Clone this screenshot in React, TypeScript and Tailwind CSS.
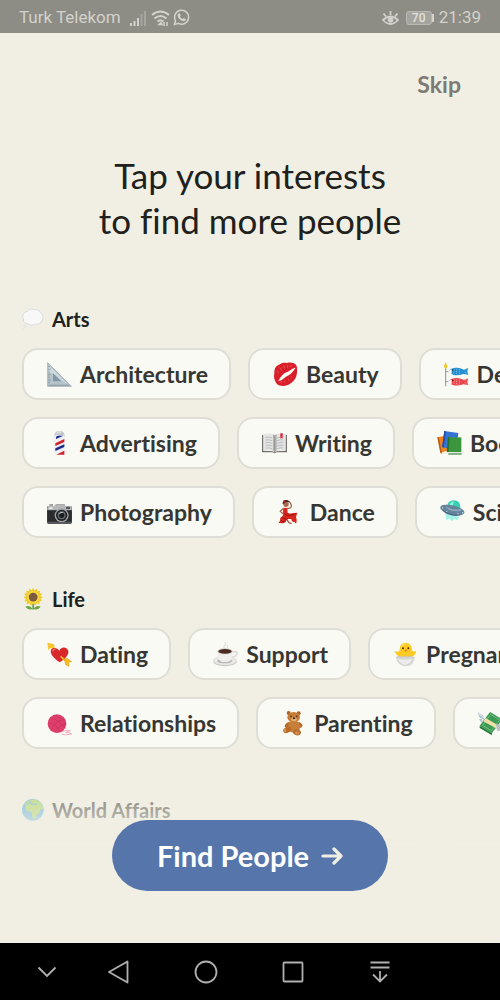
import type { ReactNode } from "react";
import { clsx } from "clsx";

interface Interest {
  label: string;
  icon: ReactNode;
}

interface Topic {
  title: string;
  icon: ReactNode;
  rows: Interest[][];
  loading?: boolean;
}

interface EmojiProps {
  children: ReactNode;
  small?: boolean;
}

const Emoji = ({ children, small }: EmojiProps) => (
  <svg
    viewBox="0 0 75 75"
    aria-hidden="true"
    className={clsx("shrink-0", small ? "size-[22px]" : "size-[25px]")}
  >
    {children}
  </svg>
);

const ThoughtBubble = () => (
  <Emoji small>
    <path
      d="M18 12C23 3 36 2 43 6c10-2 20 4 22 12 8 5 9 19 2 26-3 10-14 14-22 11-8 5-19 4-24-1C10 54 3 47 5 38-1 28 5 14 18 12Z"
      fill="#f8f8f9"
      stroke="#d5d8da"
      strokeWidth="3"
    />
    <circle cx="10" cy="62" r="4" fill="#f5f5f6" stroke="#d5d8da" strokeWidth="2" />
    <circle cx="3" cy="71" r="2.5" fill="#e2e4e5" />
  </Emoji>
);

const SetSquare = () => (
  <Emoji>
    <path d="M2 2v71h71Z" fill="#b7c4ca" stroke="#8d9ba2" strokeWidth="2" />
    <path d="M5 10v22l13 2 30 24 17 12Z" fill="#cfdadf" />
    <path d="M18 34v24h25Z" fill="#8197a4" />
    <path d="M4 14h5M4 22h7M4 30h5M4 38h7M4 46h5M4 54h7M4 62h5" stroke="#687a84" strokeWidth="2" />
    <path d="M5 70h62" stroke="#93a3ab" strokeWidth="4" />
  </Emoji>
);

const BarberPole = () => (
  <Emoji>
    <path d="M22 13C22-4 53-4 53 13v4H22Z" fill="#c4c8cb" />
    <path d="M29 8c3-6 10-6 13-4" fill="none" stroke="#f4f4f4" strokeWidth="3" />
    <path d="M22 13h31v58H22Z" fill="#eef0f3" />
    <path d="M27 21q0-7 8-7h14L27 24ZM25 52l27-12v8L25 60Z" fill="#1c2a8e" />
    <path d="M25 37l27-13v9L25 45ZM28 71l24-12v12Z" fill="#d3202a" />
  </Emoji>
);

const Camera = () => (
  <Emoji>
    <path d="M3 18h20l4-5h25l3 5h16q4 0 4 5v44q0 5-5 5H4q-4 0-4-5V22q0-4 3-4Z" fill="#55595c" />
    <path d="M1 18h22l4-5h25l3 5h19v13H1Z" fill="#b5b7b8" />
    <path d="M7 17V13h11v4" fill="#777" />
    <path d="M1 31h73v34H1Z" fill="#292b2d" />
    <rect x="7" y="22" width="10" height="5" rx="2" fill="#eee" />
    <rect x="57" y="20" width="12" height="7" rx="1" fill="#55595c" />
    <circle cx="44" cy="46" r="21" fill="#a0a3a4" />
    <circle cx="44" cy="46" r="17" fill="#1f2123" />
    <circle cx="44" cy="46" r="12" fill="#666b70" />
    <circle cx="44" cy="46" r="8" fill="#191b1e" />
    <path d="M37 42q4-6 10-5" fill="none" stroke="#cfd5da" strokeWidth="3" />
  </Emoji>
);

const Kiss = () => (
  <Emoji>
    <path
      d="M4 34C3 20 10 10 21 7 29 0 36 2 42 3 52 0 62 2 69 8c5 7 4 21 2 30-3 16-17 27-29 32-13 4-28 1-33-8C3 53 2 44 4 34Z"
      fill="#d91f2a"
    />
    <path d="M68 17C57 18 51 27 42 30 31 34 23 43 16 57c10-1 16-8 23-13 12-5 19-13 29-27Z" fill="#fbf8f4" />
    <path d="M11 27l7 6M20 16l5 9M32 10l2 9M45 9l-2 8M56 9l-4 6M24 63l2-6M36 62l-1-6M48 56l-3-5M58 46l-5-4" stroke="#ee6870" strokeWidth="2" />
  </Emoji>
);

const CarpStreamer = () => (
  <Emoji>
    <path d="M5 11v62" stroke="#8a9298" strokeWidth="3" />
    <path d="M5 0l5 13-2 6H3L0 13Z" fill="#f2c51f" />
    <path d="M5 29h10M5 59h10" stroke="#777" strokeWidth="2" />
    <path d="M16 25q7-9 24-8 13 1 19 6l14-5-3 10 3 10-15-2q-13 5-29 3-11-3-14-14Z" fill="#248fce" />
    <path d="M16 56q7-9 24-8 13 1 19 6l14-5-3 10 3 10-15-2q-13 5-29 3-11-3-14-14Z" fill="#e9474d" />
    <path d="M14 26l9-4v13l-9-2ZM14 57l9-4v13l-9-2Z" fill="#fff" />
    <path d="M30 19v18M38 20v18M46 21v16M62 24l8-3M62 31l8 3" stroke="#8cc9ee" strokeWidth="2" strokeDasharray="4 2" />
    <path d="M30 50v18M38 51v18M46 52v16M62 55l8-3M62 62l8 3" stroke="#ffb3b1" strokeWidth="2" strokeDasharray="4 2" />
    <circle cx="26" cy="24" r="2.5" fill="#10334c" />
    <circle cx="26" cy="55" r="2.5" fill="#5b1418" />
  </Emoji>
);

const OpenBook = () => (
  <Emoji>
    <path d="M0 13l4-2v48l30 2 4 3 4-3 29-2V11l4 2v51H44q-6 5-13 0H0Z" fill="#74706d" />
    <path d="M5 9q20-4 33 3 13-7 32-3v50q-20-3-32 4-13-7-33-4Z" fill="#e4e4e2" />
    <path d="M33 10q3 1 5 4 2-3 6-4v49l-6 4-5-4Z" fill="#b2b2b1" />
    <path d="M38 13v50" stroke="#858585" strokeWidth="2" />
    <path d="M11 19q9-2 20 2M11 27q9-2 20 2M11 35q9-2 20 2M11 43q9-2 20 2M11 51q9-2 20 2M45 22l9-3M45 29q9-4 19-2M45 37q9-4 19-2M45 45q9-4 19-2M45 53q9-4 19-2" stroke="#9ea9ae" strokeWidth="2" fill="none" />
    <path d="M55 7l7 0v16l-4-3-3 3Z" fill="#e0243a" />
  </Emoji>
);

const Books = () => (
  <Emoji>
    <path d="M1 19l20-4 12 45-21 6Z" fill="#ef8421" />
    <path d="M11 65l19-6 2 7-18 4Z" fill="#fff1d8" />
    <path d="M1 19l4-1 10 50-5-2Z" fill="#b9560f" />
    <path d="M22 0l42 6-6 50-42-7Z" fill="#3672d2" />
    <path d="M22 0l5 1-7 49-5-2Z" fill="#1f4fae" />
    <path d="M33 19h40v45H33Z" fill="#3b963e" />
    <path d="M33 19h5l-3 46-6-3Z" fill="#28712d" />
    <path d="M31 63l43 1v6H34q-4-1-3-7Z" fill="#e6eee0" />
    <path d="M34 69h40" stroke="#28712d" strokeWidth="3" />
  </Emoji>
);

const Dancer = () => (
  <Emoji>
    <path d="M32 25q12 1 11-9-1-6-6-11" fill="none" stroke="#a8694d" strokeWidth="4" strokeLinecap="round" />
    <path d="M17 27l-7 7 8 7" fill="none" stroke="#a8694d" strokeWidth="4" strokeLinecap="round" />
    <circle cx="27" cy="13" r="8" fill="#a8694d" />
    <path d="M17 12Q16 1 26 0q11-1 11 8-6-3-12-1-3 6-8 5Z" fill="#4b2b21" />
    <circle cx="21" cy="4" r="3" fill="#e2232a" />
    <path d="M19 23l12 1 1 14q9 4 13 2l16-2-4 13q4 10 0 20l-5-6q-8 4-9-8-8 1-12-1-6 14-15 14-5-1-11-1l5-9q-3-8 5-10 6-7 3-15Z" fill="#d9251d" />
    <path d="M20 40q9 8 19 6 10-1 17-6M16 51q7 9 17 6M11 61q7 6 14 3" stroke="#96140e" strokeWidth="3" fill="none" />
    <path d="M30 60l7 9 7 1" fill="none" stroke="#9d5b40" strokeWidth="4" />
  </Emoji>
);

const FlyingSaucer = () => (
  <Emoji>
    <path d="M16 40l42 10-6 11-9-4-7 7-8-8-9 4Z" fill="#7df0df" opacity=".7" />
    <path d="M21 21Q22 2 42 1q21 1 19 25-20 8-40-5Z" fill="#35cfb4" />
    <path d="M29 12q5-8 14-8-5 7-5 18l-8-1Z" fill="#8af4dd" />
    <ellipse cx="37" cy="30" rx="37" ry="14" transform="rotate(13 37 30)" fill="#67829b" />
    <path d="M17 19q22 14 46 8 3 7-13 7-26 0-33-15Z" fill="#8fa9be" />
    <path d="M5 27q30 22 64 15-15 9-36 4-21-5-28-19Z" fill="#4c6b88" />
    <circle cx="8" cy="24" r="2" fill="#bfe7ee" />
    <circle cx="20" cy="34" r="2" fill="#bfe7ee" />
    <circle cx="54" cy="41" r="2" fill="#bfe7ee" />
    <circle cx="68" cy="38" r="2" fill="#bfe7ee" />
  </Emoji>
);

const Sunflower = () => (
  <Emoji small>
    <path d="M38 45v28" stroke="#51923e" strokeWidth="5" />
    <path d="M37 72Q27 57 11 64q11 13 26 8ZM39 72q8-15 25-8-10 13-25 8Z" fill="#68a940" />
    <path
      d="M38 0l5 8 8-6 1 9 10-2-2 9 9 2-6 7 8 5-8 5 5 7-9 2 1 9-10-3-3 8-9-6-9 6-3-8-10 3 1-9-9-2 5-7-8-5 8-5-6-7 9-2-2-9 10 2 1-9 8 6Z"
      fill="#f0cb2c"
    />
    <circle cx="38" cy="31" r="21" fill="#f7d941" />
    <circle cx="38" cy="31" r="15" fill="#7b563b" />
    <path d="M28 26h20M26 32h24M29 38h18M33 20v22M42 20v22" stroke="#9b7654" strokeWidth="2" strokeDasharray="2 3" />
  </Emoji>
);

const HeartArrow = () => (
  <Emoji>
    <path d="M13 13l48 48" stroke="#d99b17" strokeWidth="5" />
    <path d="M1 2l20 4 3 15-13-3-7 7Z" fill="#f7c832" />
    <path
      d="M38 61C15 46 7 31 13 22c7-8 19-4 24 4 3-8 13-13 23-6 10 10 2 26-22 41Z"
      fill="#d9282c"
    />
    <path d="M17 28q1-6 8-7" fill="none" stroke="#f66c66" strokeWidth="4" />
    <path d="M41 43l16 16" stroke="#f2bd26" strokeWidth="5" />
    <path d="M54 54l5-6 10 8 5 3-9 1 1 13-10-5Z" fill="#f9bd24" stroke="#dfa01f" strokeWidth="2" />
  </Emoji>
);

const Coffee = () => (
  <Emoji>
    <ellipse cx="36" cy="58" rx="36" ry="15" fill="#cbc9c8" />
    <ellipse cx="36" cy="55" rx="36" ry="14" fill="#e9e7e5" />
    <ellipse cx="35" cy="57" rx="22" ry="7" fill="#b9b6b4" />
    <path d="M58 31q16-6 14 4-2 9-17 12" fill="none" stroke="#dedcda" strokeWidth="5" />
    <path d="M13 30h46q1 27-15 30H27Q13 55 13 30Z" fill="#f0efed" />
    <ellipse cx="36" cy="28" rx="23" ry="9" fill="#d0cdca" />
    <ellipse cx="36" cy="28" rx="20" ry="7" fill="#4b2b20" />
    <path d="M34 18q-5-5 2-9 4-4 0-8M42 18q5-5 0-9" fill="none" stroke="#d6d5d2" strokeWidth="3" />
  </Emoji>
);

const Chick = () => (
  <Emoji>
    <path d="M19 27Q20 2 38 2t20 25q4 2 12 0-3 14-14 17H21Q9 41 5 27q9 3 14 0Z" fill="#fdcb24" />
    <path d="M26 12q4-7 11-7" fill="none" stroke="#ffe263" strokeWidth="4" />
    <circle cx="30" cy="19" r="3" fill="#493118" />
    <circle cx="46" cy="19" r="3" fill="#493118" />
    <path d="M34 23h9l-5 8Z" fill="#ef7720" />
    <path d="M9 46l10-3 7 3 9-3 9 3 8-3 13 4q-2 25-27 26Q13 72 9 46Z" fill="#d6d7d6" />
    <path d="M15 50q7 16 22 18 17-4 20-18-20 6-42 0Z" fill="#ececeb" />
    <path d="M9 46l10-3 7 3 9-3 9 3 8-3 13 4" fill="none" stroke="#b8bab8" strokeWidth="2" />
  </Emoji>
);

const Yarn = () => (
  <Emoji>
    <path d="M28 64q13 0 20-3 13-5 22-2-10 1-14 6 11-3 18 4-16 4-30 1" fill="none" stroke="#ed8da5" strokeWidth="2" />
    <circle cx="30" cy="38" r="28" fill="#df3f6a" />
    <path d="M9 22q24 1 46 31M5 36q22 1 34 27M18 13q24 4 39 29M14 58Q20 31 53 24M24 64q5-18 33-26" stroke="#c6305a" strokeWidth="2" fill="none" />
  </Emoji>
);

const TeddyBear = () => (
  <Emoji>
    <circle cx="23" cy="6" r="6" fill="#a9642b" />
    <circle cx="53" cy="7" r="6" fill="#a9642b" />
    <path d="M23 33Q11 37 11 48l6 4 12-9M51 33q11 1 14 11-5 9-12 6Z" fill="#b96b29" />
    <path d="M23 33h30q8 18-1 31-18 4-30-5Z" fill="#c77f3a" />
    <ellipse cx="38" cy="19" rx="19" ry="16" fill="#c77d36" />
    <ellipse cx="39" cy="25" rx="8" ry="6" fill="#e5b978" />
    <ellipse cx="39" cy="22" rx="4" ry="3" fill="#49291c" />
    <circle cx="30" cy="16" r="2.5" fill="#49291c" />
    <circle cx="47" cy="16" r="2.5" fill="#49291c" />
    <ellipse cx="19" cy="57" rx="13" ry="8" transform="rotate(-25 19 57)" fill="#b96b29" />
    <ellipse cx="48" cy="64" rx="12" ry="9" transform="rotate(15 48 64)" fill="#b96b29" />
    <ellipse cx="12" cy="58" rx="4" ry="6" transform="rotate(-25 12 58)" fill="#d08f50" />
    <ellipse cx="48" cy="66" rx="6" ry="5" fill="#d08f50" />
  </Emoji>
);

const FlyingMoney = () => (
  <Emoji>
    <path d="M28 26Q17 22 13 11 7 10 0 4q1 13 8 19-3 2-5 1 4 10 12 12l9 3Z" fill="#b4c3cd" />
    <path d="M3 8q11 6 21 20M7 22l15 8M11 29l12 6" stroke="#eef3f5" strokeWidth="3" fill="none" />
    <path d="M36 3l37 22-31 41-37-22Z" fill="#3b9b55" />
    <path d="M5 44l37 22v7L5 51Z" fill="#247b3c" />
    <path d="M38 10l27 17-25 32-26-16Z" fill="none" stroke="#91cd91" strokeWidth="2" />
    <path d="M23 21l41 24-5 10-43-24Z" fill="#f1dfa7" />
    <path d="M54 41l18-2-5 14 8 6-17 1Z" fill="#b4c3cd" />
  </Emoji>
);

const Globe = () => (
  <Emoji small>
    <circle cx="37" cy="37" r="37" fill="#369de2" />
    <path
      d="M27 5q22-9 37 9 8 10 7 21l-9 2-4 12-7 2-5 17q-8 3-11-8l-2-16-14-2q-12-9-5-20 7-9 19-8Z"
      fill="#9acb3d"
    />
    <path d="M8 16Q17 5 28 3l-2 10-9 1-6 9Z" fill="#91c942" />
    <path d="M29 15q12 8 24-1" stroke="#369de2" strokeWidth="4" fill="none" />
  </Emoji>
);

const topics: Topic[] = [
  {
    title: "Arts",
    icon: <ThoughtBubble />,
    rows: [
      [
        { label: "Architecture", icon: <SetSquare /> },
        { label: "Beauty", icon: <Kiss /> },
        { label: "Design", icon: <CarpStreamer /> },
      ],
      [
        { label: "Advertising", icon: <BarberPole /> },
        { label: "Writing", icon: <OpenBook /> },
        { label: "Books", icon: <Books /> },
      ],
      [
        { label: "Photography", icon: <Camera /> },
        { label: "Dance", icon: <Dancer /> },
        { label: "Sci-Fi", icon: <FlyingSaucer /> },
      ],
    ],
  },
  {
    title: "Life",
    icon: <Sunflower />,
    rows: [
      [
        { label: "Dating", icon: <HeartArrow /> },
        { label: "Support", icon: <Coffee /> },
        { label: "Pregnancy", icon: <Chick /> },
      ],
      [
        { label: "Relationships", icon: <Yarn /> },
        { label: "Parenting", icon: <TeddyBear /> },
        { label: "Money", icon: <FlyingMoney /> },
      ],
    ],
  },
  { title: "World Affairs", icon: <Globe />, rows: [], loading: true },
];

const StatusBar = () => (
  <header className="flex h-[33px] shrink-0 items-center justify-between bg-[#8d8c85] pl-[19px] pr-[19px] pt-0.5 font-['Roboto',sans-serif] text-[17px] text-[#d3d2cc]">
    <div className="flex items-center">
      <span>Turk Telekom</span>
      <svg viewBox="0 0 17 16" className="ml-[9px] h-4 w-[17px]" fill="currentColor" aria-hidden="true">
        <path d="M0 13h2v3H0zM3.500 11h2v5h-2zM7 8h2v8H7z" />
        <path d="M10.500 4h2v12h-2zM14 1h2v15h-2z" opacity=".35" />
      </svg>
      <svg viewBox="0 0 19 16" className="ml-1 h-4 w-[19px]" fill="none" stroke="currentColor" strokeWidth="2" aria-hidden="true">
        <path d="M1 5q8.500-7 17 0M3.500 8.500q6-5 12 0M6.500 11.500q3-2.500 6 0" />
        <path d="M8 14.500l2-2 1 2ZM13 12v4M16 12v4" strokeWidth="1.500" />
      </svg>
      <svg viewBox="0 0 17 17" className="ml-[3px] size-[17px]" aria-hidden="true">
        <path d="M1.500 15.500l1-4A7 7 0 1 1 5.500 14.400Z" fill="none" stroke="currentColor" strokeWidth="1.500" />
        <path d="M5.500 4.500l1.200-.3 1 2.300-.8 1q1 1.900 2.800 2.500l1-1.100 2.100 1c.2 1.700-1.500 2.500-2.700 2.200-3.300-.8-6-4-5.400-6.300Z" fill="currentColor" />
      </svg>
    </div>
    <div className="flex items-center">
      <svg viewBox="0 0 17 16" className="h-4 w-[17px]" fill="none" stroke="currentColor" strokeWidth="1.800" aria-hidden="true">
        <path d="M1 10Q8.500 3 16 10q-7.500 8-15 0ZM8.500 5V1M4 6.500L1.500 3.500M13 6.500l2.500-3" />
        <circle cx="8.500" cy="9.800" r="2" fill="currentColor" />
      </svg>
      <span className="ml-[7px] flex h-[14px] w-[26px] items-center justify-center rounded-[3px] border border-[#b9b8b2] bg-[#a5a49e] text-xs leading-3 font-medium text-[#e2e1dc]">
        70
      </span>
      <span className="h-2 w-0.5 bg-current" />
      <span className="ml-[5px]">21:39</span>
    </div>
  </header>
);

const InterestChip = ({ label, icon }: Interest) => (
  <button
    type="button"
    className="flex h-[52px] shrink-0 items-center gap-2 rounded-2xl border-2 border-[#dfded6] bg-[#fafaf5] pl-[23px] pr-[21px] text-[23px] font-bold text-[#363632]"
  >
    {icon}
    {label}
  </button>
);

const TopicSection = ({ title, icon, rows, loading }: Topic) => (
  <section className="flex flex-col gap-[17px]">
    <h2 className="flex h-6 items-center gap-2 text-xl font-bold">
      {icon}
      {title}
    </h2>
    {rows.map((row) => (
      <div key={row[0].label} className="flex gap-[17px] overflow-hidden">
        {row.map((interest) => (
          <InterestChip key={interest.label} {...interest} />
        ))}
      </div>
    ))}
    {loading && (
      <div className="flex gap-[17px] overflow-hidden">
        <div className="h-[52px] w-[408px] shrink-0 rounded-2xl border-2 border-[#dfded6] bg-[#fafaf5]" />
        <div className="h-[52px] w-[180px] shrink-0 rounded-2xl border-2 border-[#dfded6] bg-[#fafaf5]" />
      </div>
    )}
  </section>
);

const NavigationBar = () => (
  <nav className="flex h-[57px] shrink-0 items-center bg-black pl-[35px] text-[#b0b0b0]">
    <button type="button" aria-label="Hide keyboard" className="mr-12">
      <svg viewBox="0 0 24 24" className="size-6" fill="none" stroke="currentColor" strokeWidth="1.800">
        <path d="M3.500 7.500l8.500 8.500 8.500-8.500" />
      </svg>
    </button>
    <div className="flex gap-[63px]">
      <button type="button" aria-label="Back">
        <svg viewBox="0 0 24 24" className="size-6" fill="none" stroke="currentColor" strokeWidth="1.800" strokeLinejoin="round">
          <path d="M20.500 1.500v21L2 12Z" />
        </svg>
      </button>
      <button type="button" aria-label="Home">
        <svg viewBox="0 0 24 24" className="size-6" fill="none" stroke="currentColor" strokeWidth="1.800">
          <circle cx="12" cy="12" r="10.500" />
        </svg>
      </button>
      <button type="button" aria-label="Recent apps">
        <svg viewBox="0 0 24 24" className="size-6" fill="none" stroke="currentColor" strokeWidth="1.800">
          <rect x="2.500" y="2.500" width="19" height="19" rx="1" />
        </svg>
      </button>
      <button type="button" aria-label="Notifications">
        <svg viewBox="0 0 24 24" className="size-6" fill="none" stroke="currentColor" strokeWidth="1.800">
          <path d="M2.500 2.500h19M2.500 7.500h19M12 11v10.500M5 14.500l7 7 7-7" />
        </svg>
      </button>
    </div>
  </nav>
);

const App = () => {
  return (
    <div className="flex h-screen flex-col bg-[#f1efe3] font-['Lato',sans-serif] text-[#20201d] [font-variant-ligatures:none]">
      <StatusBar />
      <main className="relative flex-1 overflow-hidden">
        <div className="flex justify-end pr-[39px] pt-[35px]">
          <button type="button" className="text-[23px] leading-8 font-bold text-[#7c7a72]">
            Skip
          </button>
        </div>
        <h1 className="mt-[53px] text-center text-[35px] leading-[45px]">
          Tap your interests
          <br />
          to find more people
        </h1>
        <div className="mt-16 flex flex-col gap-[49px] pl-[22px]">
          {topics.map((topic) => (
            <TopicSection key={topic.title} {...topic} />
          ))}
        </div>
        {/* fades the list out behind the call to action */}
        <div className="pointer-events-none absolute inset-x-0 bottom-0 flex h-[200px] flex-col items-center justify-end bg-linear-to-b from-[#f1efe3]/0 to-[#f1efe3] to-52% pb-[52px]">
          <button
            type="button"
            className="pointer-events-auto flex h-[71px] items-center gap-3 rounded-full bg-[#5575ab] px-[45px] text-[29px] font-bold text-white"
          >
            Find People
            <svg viewBox="0 0 22 18" className="h-[18px] w-[22px]" fill="none" stroke="#f1efe3" strokeWidth="3.200" strokeLinecap="round" strokeLinejoin="round" aria-hidden="true">
              <path d="M2 9h18M13 2l7 7-7 7" />
            </svg>
          </button>
        </div>
      </main>
      <NavigationBar />
    </div>
  );
};

export default App;
